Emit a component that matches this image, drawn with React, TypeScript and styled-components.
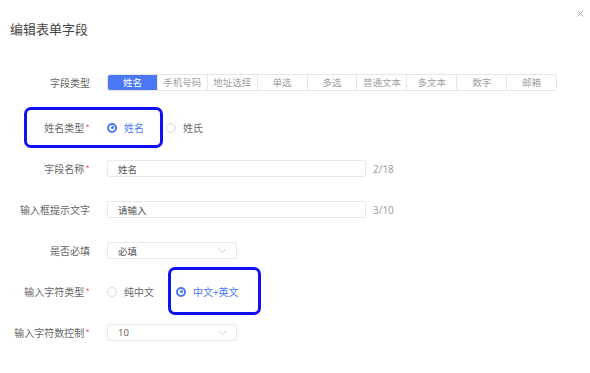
import * as React from 'react';
import styled, { createGlobalStyle } from 'styled-components';

const GlobalStyle = createGlobalStyle`
  html, body {
    margin: 0;
    padding: 0;
    background: #ffffff;
  }
  body {
    font-family: "Noto Sans CJK SC", "Noto Sans", sans-serif;
    color: #666;
  }
`;

const BLUE = '#4b79f5';

const Dialog = styled.div`
  position: relative;
  width: 590px;
  height: 373px;
  box-sizing: border-box;
  padding: 21px 0 0 0;
`;

const Title = styled.h1`
  margin: 0 0 0 10px;
  font-size: 13px;
  line-height: 16px;
  font-weight: 400;
  color: #444;
`;

const Close = styled.button`
  position: absolute;
  top: 9px;
  right: 5px;
  width: 9px;
  height: 9px;
  padding: 0;
  border: 0;
  background: transparent;
  display: flex;
  align-items: center;
  justify-content: center;
  cursor: pointer;
`;

const Form = styled.div`
  margin-top: 37px;
  display: flex;
  flex-direction: column;
  gap: 24px;
`;

const Row = styled.div<{ $extra?: number }>`
  position: relative;
  display: flex;
  align-items: center;
  height: 17px;
  margin-bottom: ${(p) => p.$extra ?? 0}px;
`;

const Label = styled.div`
  width: 90px;
  padding-right: 17px;
  box-sizing: content-box;
  text-align: right;
  font-size: 10px;
  line-height: 17px;
  color: #666;
  white-space: nowrap;
`;

const Star = styled.span`
  color: #f56c6c;
  margin-left: 1px;
`;

const Tabs = styled.div`
  display: flex;
  width: 450px;
  border: 1px solid #e6e6e6;
  border-radius: 3px;
  overflow: hidden;
  height: 17px;
  box-sizing: border-box;
`;

const Tab = styled.div<{ $active?: boolean }>`
  flex: 1;
  box-sizing: border-box;
  border-left: 1px solid ${(p) => (p.$active ? BLUE : '#e6e6e6')};
  background: ${(p) => (p.$active ? BLUE : '#fff')};
  color: ${(p) => (p.$active ? '#fff' : '#a0a0a0')};
  font-size: 9.5px;
  line-height: 15px;
  text-align: center;
  &:first-child {
    border-left: 0;
  }
`;

const RadioGroup = styled.div`
  display: flex;
  align-items: center;
  gap: 22px;
`;

const RadioOption = styled.label<{ $checked?: boolean }>`
  display: flex;
  align-items: center;
  gap: 7px;
  font-size: 10px;
  line-height: 17px;
  color: ${(p) => (p.$checked ? BLUE : '#666')};
`;

const RadioDot = styled.span<{ $checked?: boolean }>`
  width: 10px;
  height: 10px;
  box-sizing: border-box;
  border-radius: 50%;
  border: ${(p) => (p.$checked ? `2.5px solid ${BLUE}` : '1px solid #dcdcdc')};
  background: #fff;
  display: flex;
  align-items: center;
  justify-content: center;
  &::after {
    content: '';
    display: ${(p) => (p.$checked ? 'block' : 'none')};
    width: 3px;
    height: 3px;
    border-radius: 50%;
    background: ${BLUE};
  }
`;

const Input = styled.div<{ $width: number }>`
  width: ${(p) => p.$width}px;
  height: 17px;
  box-sizing: border-box;
  border: 1px solid #e8e8e8;
  border-radius: 2px;
  padding: 0 9px 0 10px;
  display: flex;
  align-items: center;
  justify-content: space-between;
  font-size: 9.5px;
  color: #555;
`;

const Count = styled.span`
  margin-left: 7px;
  font-size: 10px;
  color: #999;
  font-family: "Open Sans", "Noto Sans", sans-serif;
`;

const Num = styled.span`
  font-family: "Open Sans", "Noto Sans", sans-serif;
`;

const Highlight = styled.div<{ $left: number; $top: number; $w: number; $h: number }>`
  position: absolute;
  left: ${(p) => p.$left}px;
  top: ${(p) => p.$top}px;
  width: ${(p) => p.$w}px;
  height: ${(p) => p.$h}px;
  box-sizing: border-box;
  border: 3px solid #1010f0;
  border-radius: 7px;
  pointer-events: none;
`;

const Chevron = () => (
  <svg width="9" height="5" viewBox="0 0 9 5" fill="none">
    <path d="M0.5 0.5 L4.5 4.3 L8.5 0.5" stroke="#c8c8c8" strokeWidth="0.9" />
  </svg>
);

const tabs = ['姓名', '手机号码', '地址选择', '单选', '多选', '普通文本', '多文本', '数字', '邮箱'];

export default function App() {
  return (
    <>
      <GlobalStyle />
      <Dialog>
        <Title>编辑表单字段</Title>
        <Close aria-label="close">
          <svg width="7" height="7" viewBox="0 0 7 7">
            <path d="M0.5 0.5 L6.5 6.5 M6.5 0.5 L0.5 6.5" stroke="#aaa" strokeWidth="0.9" />
          </svg>
        </Close>
        <Form>
          <Row $extra={4}>
            <Label>字段类型</Label>
            <Tabs>
              {tabs.map((t, i) => (
                <Tab key={t} $active={i === 0}>
                  {t}
                </Tab>
              ))}
            </Tabs>
          </Row>
          <Row>
            <Label>
              姓名类型<Star>*</Star>
            </Label>
            <RadioGroup>
              <RadioOption $checked>
                <RadioDot $checked />
                姓名
              </RadioOption>
              <RadioOption>
                <RadioDot />
                姓氏
              </RadioOption>
            </RadioGroup>
            <Highlight $left={24} $top={-12} $w={139} $h={41} />
          </Row>
          <Row>
            <Label>
              字段名称<Star>*</Star>
            </Label>
            <Input $width={259}>姓名</Input>
            <Count>2/18</Count>
          </Row>
          <Row>
            <Label>输入框提示文字</Label>
            <Input $width={259}>请输入</Input>
            <Count>3/10</Count>
          </Row>
          <Row>
            <Label>是否必填</Label>
            <Input $width={130}>
              必填
              <Chevron />
            </Input>
          </Row>
          <Row>
            <Label>
              输入字符类型<Star>*</Star>
            </Label>
            <RadioGroup>
              <RadioOption>
                <RadioDot />
                纯中文
              </RadioOption>
              <RadioOption $checked>
                <RadioDot $checked />
                中文+英文
              </RadioOption>
            </RadioGroup>
            <Highlight $left={168} $top={-16} $w={93} $h={48} />
          </Row>
          <Row>
            <Label>
              输入字符数控制<Star>*</Star>
            </Label>
            <Input $width={130}>
              <Num>10</Num>
              <Chevron />
            </Input>
          </Row>
        </Form>
      </Dialog>
    </>
  );
}
